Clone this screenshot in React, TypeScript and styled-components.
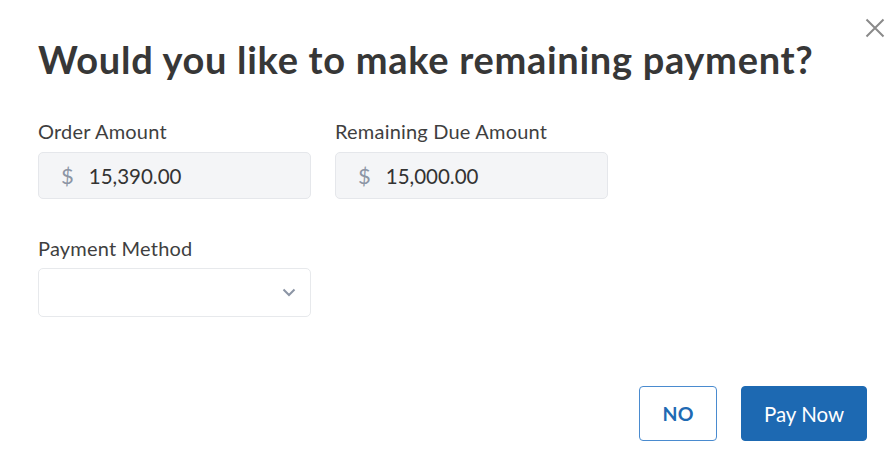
import React from "react";
import styled, { createGlobalStyle } from "styled-components";

const Global = createGlobalStyle`
  html, body { margin: 0; padding: 0; background: #fff; }
  body { font-family: Lato, "Open Sans", sans-serif; }
  * { box-sizing: border-box; }
`;

const Modal = styled.div`
  position: relative;
  width: 889px;
  height: 453px;
  background: #fff;
  padding: 36px 22px 0 38px;
  display: flex;
  flex-direction: column;
`;

const Close = styled.button`
  position: absolute;
  top: 17px;
  right: 3px;
  width: 22px;
  height: 22px;
  padding: 0;
  border: none;
  background: none;
  display: flex;
  align-items: center;
  justify-content: center;
  cursor: pointer;
`;

const Title = styled.h1`
  margin: 0;
  font-size: 38px;
  font-weight: 700;
  line-height: 46px;
  color: #373737;
  letter-spacing: 0.7px;
  white-space: nowrap;
`;

const Row = styled.div<{ $mt: number }>`
  display: flex;
  gap: 24px;
  margin-top: ${(p) => p.$mt}px;
`;

const Field = styled.div`
  display: flex;
  flex-direction: column;
  width: 273px;
`;

const Label = styled.label<{ $mb: number }>`
  font-size: 20px;
  line-height: 24px;
  color: #3f3f3f;
  letter-spacing: 0.2px;
  margin-bottom: ${(p) => p.$mb}px;
  white-space: nowrap;
`;

const AmountBox = styled.div`
  height: 47px;
  border: 1px solid #e5e7eb;
  border-radius: 5px;
  background: #f4f5f7;
  display: flex;
  align-items: center;
  padding-left: 22px;
  font-size: 20.5px;
  color: #333;
`;

const Dollar = styled.span`
  color: #8c95a5;
  font-size: 22px;
  margin-right: 15px;
`;

const SelectBox = styled.div`
  height: 49px;
  border: 1px solid #e7e9ec;
  border-radius: 5px;
  background: #fff;
  display: flex;
  align-items: center;
  justify-content: flex-end;
  padding-right: 14px;
`;

const Footer = styled.div`
  display: flex;
  justify-content: flex-end;
  gap: 24px;
  margin-top: auto;
  margin-bottom: 12px;
`;

const Button = styled.button<{ $primary?: boolean }>`
  height: 55px;
  border-radius: 4px;
  font-family: Lato, sans-serif;
  cursor: pointer;
  padding: 0;
  width: ${(p) => (p.$primary ? "126px" : "78px")};
  font-size: ${(p) => (p.$primary ? "20.5px" : "19.5px")};
  border: 1.5px solid ${(p) => (p.$primary ? "#1d69b2" : "#4a8bcf")};
  background: ${(p) => (p.$primary ? "#1d69b2" : "#fff")};
  color: ${(p) => (p.$primary ? "#fff" : "#1f6ab3")};
  font-weight: ${(p) => (p.$primary ? 400 : 700)};
`;

export default function App() {
  return (
    <>
      <Global />
      <Modal>
        <Close aria-label="Close">
          <svg width="20" height="20" viewBox="0 0 20 20">
            <path d="M1.5 1.5 L18.5 18.5 M18.5 1.5 L1.5 18.5" stroke="#8a8a8a" strokeWidth="2" fill="none" />
          </svg>
        </Close>
        <Title>Would you like to make remaining payment?</Title>
        <Row $mt={37}>
          <Field>
            <Label $mb={9}>Order Amount</Label>
            <AmountBox>
              <Dollar>$</Dollar>15,390.00
            </AmountBox>
          </Field>
          <Field>
            <Label $mb={9}>Remaining Due Amount</Label>
            <AmountBox>
              <Dollar>$</Dollar>15,000.00
            </AmountBox>
          </Field>
        </Row>
        <Row $mt={37}>
          <Field>
            <Label $mb={8}>Payment Method</Label>
            <SelectBox>
              <svg width="14" height="9" viewBox="0 0 14 9">
                <path d="M1.5 1.5 L7 7 L12.5 1.5" stroke="#8c95a5" strokeWidth="2" fill="none" />
              </svg>
            </SelectBox>
          </Field>
        </Row>
        <Footer>
          <Button>NO</Button>
          <Button $primary>Pay Now</Button>
        </Footer>
      </Modal>
    </>
  );
}
